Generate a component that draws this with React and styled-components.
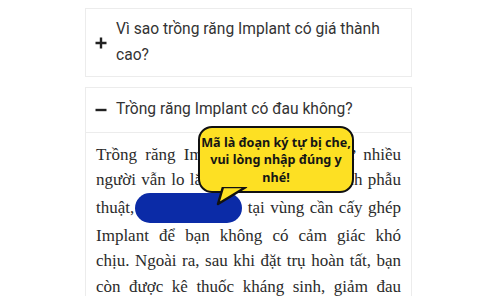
import React from "react";
import styled, { createGlobalStyle } from "styled-components";

const Global = createGlobalStyle`
  html, body { margin: 0; padding: 0; background: #ffffff; }
  body { overflow: hidden; width: 500px; height: 296px; }
`;

const Page = styled.div`
  width: 327px;
  margin: 8px 0 0 85px;
  display: flex;
  flex-direction: column;
  gap: 10px;
`;

const Card = styled.section`
  border: 1px solid #ececec;
  background: #fff;
  position: relative;
`;

const Header = styled.div`
  display: flex;
  align-items: center;
  gap: 9px;
  padding: ${(p) => (p.$open ? "9px 10px 9px 9px" : "8px 10px 8px 9px")};
  border-bottom: ${(p) => (p.$open ? "1px solid #ececec" : "none")};
  font-family: Roboto, "Liberation Sans", sans-serif;
  font-size: 15.6px;
  line-height: 25.5px;
  color: #333;
`;

const IconBox = styled.span`
  flex: 0 0 12px;
  display: flex;
  align-items: center;
  justify-content: center;
`;

const Body = styled.div`
  padding: 9px 10px 0 10px;
  font-family: "Liberation Serif", "Times New Roman", serif;
  font-size: 17px;
  line-height: 25.5px;
  color: #2b2b2b;
  position: relative;
`;

const Line = styled.div`
  white-space: nowrap;
  display: flex;
  justify-content: space-between;
  align-items: center;
`;

const Word = styled.span``;

const Mask = styled.span`
  display: inline-block;
  width: 107px;
  height: 30px;
  border-radius: 15px;
  background: #0b2ba7;
  margin-left: 1px;
`;

const Group = styled.span`
  display: flex;
  align-items: center;
`;

const Bubble = styled.div`
  position: absolute;
  left: 112px;
  top: -7px;
  width: 152px;
  height: 63px;
  box-sizing: content-box;
  border: 2.5px solid #111;
  border-radius: 14px;
  background: #fde023;
  font-family: "Noto Sans", Inter, sans-serif;
  font-weight: 700;
  font-size: 12.6px;
  line-height: 17.5px;
  color: #151515;
  text-align: center;
  z-index: 2;
`;

const Tail = styled.svg`
  position: absolute;
  left: 17px;
  top: 58px;
  overflow: visible;
`;

const BubbleText = styled.div`
  position: relative;
  z-index: 1;
  padding-top: 6px;
`;

const Plus = () => (
  <svg width="12" height="12" viewBox="0 0 12 12">
    <path d="M6 0.5V11.5M0.5 6H11.5" stroke="#222" strokeWidth="2.4" />
  </svg>
);

const Minus = () => (
  <svg width="12" height="12" viewBox="0 0 12 12">
    <path d="M0.5 6H11.5" stroke="#222" strokeWidth="2.4" />
  </svg>
);

const lines = [
  ["Trồng", "răng", "Implant", "không", "đau", "như", "nhiều"],
  ["người", "vẫn", "lo", "lắng.", "Bởi", "trong", "quá", "trình", "phẫu"],
  null,
  ["Implant", "để", "bạn", "không", "có", "cảm", "giác", "khó"],
  ["chịu.", "Ngoài", "ra,", "sau", "khi", "đặt", "trụ", "hoàn", "tất,", "bạn"],
  ["còn", "được", "kê", "thuốc", "kháng", "sinh,", "giảm", "đau"],
];

export default function App() {
  return (
    <>
      <Global />
      <Page>
        <Card>
          <Header>
            <IconBox>
              <Plus />
            </IconBox>
            <span>Vì sao trồng răng Implant có giá thành cao?</span>
          </Header>
        </Card>
        <Card>
          <Header $open>
            <IconBox>
              <Minus />
            </IconBox>
            <span>Trồng răng Implant có đau không?</span>
          </Header>
          <Body>
            {lines.map((words, i) =>
              words ? (
                <Line key={i}>
                  {words.map((w, j) => (
                    <Word key={j}>{w}</Word>
                  ))}
                </Line>
              ) : (
                <Line key={i}>
                  <Group>
                    <Word>thuật,</Word>
                    <Mask />
                  </Group>
                  <Word>tại</Word>
                  <Word>vùng</Word>
                  <Word>cần</Word>
                  <Word>cấy</Word>
                  <Word>ghép</Word>
                </Line>
              )
            )}
            <Bubble>
              <Tail width="30" height="20" viewBox="0 0 30 20">
                <path
                  d="M6 1 L1 18 L29 1 Z"
                  fill="#fde023"
                  stroke="#111"
                  strokeWidth="2.5"
                  strokeLinejoin="round"
                />
                <rect x="3" y="-3" width="28" height="4" fill="#fde023" />
              </Tail>
              <BubbleText>
                Mã là đoạn ký tự bị che,
                <br />
                vui lòng nhập đúng y
                <br />
                nhé!
              </BubbleText>
            </Bubble>
          </Body>
        </Card>
      </Page>
    </>
  );
}
